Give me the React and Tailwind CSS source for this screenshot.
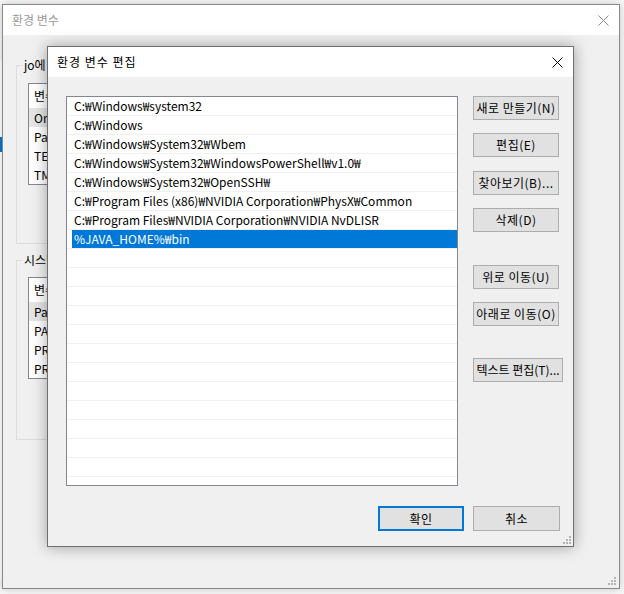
import React from "react";

const paths = [
  "C:₩Windows₩system32",
  "C:₩Windows",
  "C:₩Windows₩System32₩Wbem",
  "C:₩Windows₩System32₩WindowsPowerShell₩v1.0₩",
  "C:₩Windows₩System32₩OpenSSH₩",
  "C:₩Program Files (x86)₩NVIDIA Corporation₩PhysX₩Common",
  "C:₩Program Files₩NVIDIA Corporation₩NVIDIA NvDLISR",
  "%JAVA_HOME%₩bin",
];

const font = { fontFamily: '"Noto Sans CJK KR", "Liberation Sans", sans-serif' };

function Grip() {
  return (
    <div className="grid grid-cols-3 gap-[1px]">
      {[0, 0, 1, 0, 1, 1, 1, 1, 1].map((on, i) => (
        <span key={i} className={on ? "h-[2px] w-[2px] bg-[#b5b5b5]" : "h-[2px] w-[2px]"} />
      ))}
    </div>
  );
}

function WinButton({ children, className = "" }) {
  return (
    <button className={`flex h-[24px] items-center justify-center whitespace-nowrap border border-[#adadad] bg-[#e1e1e1] text-[12px] leading-none text-black ${className}`}>
      {children}
    </button>
  );
}

function Close({ color = "#000" }) {
  return (
    <svg width="11" height="11" viewBox="0 0 11 11">
      <path d="M0.5 0.5 L10.5 10.5 M10.5 0.5 L0.5 10.5" stroke={color} strokeWidth="1" />
    </svg>
  );
}

// only the left edge of these lists peeks out from under the front dialog
function VarList({ header, rows, selected }) {
  return (
    <div className="ml-[11px] mr-[11px] border border-[#828790] bg-white text-[12px] text-black">
      <div className="flex h-[24px] items-center pl-[5px]">
        <span className="w-[14px] overflow-hidden whitespace-nowrap">{header}</span>
      </div>
      {rows.map((r, i) => (
        <div
          key={i}
          className={`flex h-[19px] items-center pl-[5px] ${i === selected ? "bg-[#e5e5e5]" : ""}`}
        >
          <span className="w-[14px] overflow-hidden whitespace-nowrap">{r}</span>
        </div>
      ))}
    </div>
  );
}

function GroupLabel({ children }) {
  return (
    <span className="absolute -top-[9px] left-[5px] w-[26px] overflow-hidden whitespace-nowrap bg-[#f0f0f0] px-[2px] text-[12px] leading-[16px] text-black">
      {children}
    </span>
  );
}

export default function App() {
  const emptyRows = Array.from({ length: 12 });

  return (
    <div className="relative h-[594px] w-[624px] overflow-hidden bg-[#f7f7f7]" style={font}>
      {/* window behind, at the very left */}
      <div className="absolute left-0 top-[60px] h-[520px] w-[3px] bg-white">
        <div className="mt-[77px] h-[15px] w-[3px] bg-[#0078d7]" />
      </div>

      {/* 환경 변수 (background dialog) */}
      <div className="absolute left-[2px] top-[4px] flex h-[585px] w-[618px] flex-col border border-[#888] bg-[#f0f0f0] shadow-[0_0_8px_rgba(0,0,0,0.2)]">
        <div className="flex h-[30px] items-center justify-between bg-white pl-[9px] pr-[10px]">
          <span className="text-[12px] text-[#9a9a9a]">환경 변수</span>
          <Close color="#8a8a8a" />
        </div>

        <div className="relative ml-[13px] mr-[70px] mt-[30px] h-[179px] border border-[#dcdcdc]">
          <GroupLabel>jo에 대한 사용자 변수(U)</GroupLabel>
          <div className="pt-[17px]">
            <VarList header="변수" rows={["OneDrive", "Path", "TEMP", "TMP"]} selected={0} />
          </div>
        </div>

        <div className="relative ml-[13px] mr-[70px] mt-[16px] h-[180px] border border-[#dcdcdc]">
          <GroupLabel>시스템 변수(S)</GroupLabel>
          <div className="pt-[16px]">
            <VarList
              header="변수"
              rows={["Path", "PATHEXT", "PROCESSOR_ARCHITECTURE", "PROCESSOR_IDENTIFIER"]}
              selected={0}
            />
          </div>
        </div>

        <div className="absolute bottom-[3px] right-[3px]">
          <Grip />
        </div>
      </div>

      {/* 환경 변수 편집 (front dialog) */}
      <div className="absolute left-[47px] top-[46px] flex h-[501px] w-[527px] flex-col border border-[#6f6f6f] bg-[#f0f0f0] shadow-[0_0_14px_rgba(0,0,0,0.35)]">
        <div className="flex h-[30px] shrink-0 items-center justify-between bg-white pl-[9px] pr-[10px]">
          <span className="text-[12px] tracking-[1px] text-black">환경 변수 편집</span>
          <Close />
        </div>

        <div className="flex pl-[18px] pt-[19px]">
          {/* path list */}
          <div className="h-[390px] w-[392px] overflow-hidden border border-[#828790] bg-white text-[12px] text-black">
            {paths.map((p, i) => (
              <div key={i} className="h-[19px] border-b border-[#f0f0f0]">
                <div
                  className={`ml-[5px] flex h-[18px] items-center pl-[2px] ${
                    i === paths.length - 1 ? "bg-[#0078d7] text-white" : ""
                  }`}
                >
                  {p}
                </div>
              </div>
            ))}
            {emptyRows.map((_, i) => (
              <div key={i} className="h-[19px] border-b border-[#f0f0f0]" />
            ))}
          </div>

          {/* side buttons */}
          <div className="ml-[15px] flex flex-col">
            <WinButton className="w-[86px] tracking-[0.5px]">새로 만들기(N)</WinButton>
            <WinButton className="mt-[13px] w-[86px] tracking-[0.5px]">편집(E)</WinButton>
            <WinButton className="mt-[14px] w-[86px] tracking-[0.5px]">찾아보기(B)...</WinButton>
            <WinButton className="mt-[13px] w-[86px] tracking-[0.5px]">삭제(D)</WinButton>
            <WinButton className="mt-[33px] w-[86px] tracking-[0.5px]">위로 이동(U)</WinButton>
            <WinButton className="mt-[13px] w-[86px] tracking-[0.5px]">아래로 이동(O)</WinButton>
            <WinButton className="mt-[32px] w-[90px]">텍스트 편집(T)...</WinButton>
          </div>
        </div>

        <div className="mt-[20px] flex justify-end gap-[9px] pr-[13px]">
          <button className="flex h-[25px] w-[86px] items-center justify-center border-2 border-[#0078d7] bg-[#e1e1e1] text-[12px] tracking-[0.5px] text-black">
            확인
          </button>
          <WinButton className="h-[25px] w-[87px] tracking-[0.5px]">취소</WinButton>
        </div>

        <div className="absolute bottom-[2px] right-[2px]">
          <Grip />
        </div>
      </div>
    </div>
  );
}
